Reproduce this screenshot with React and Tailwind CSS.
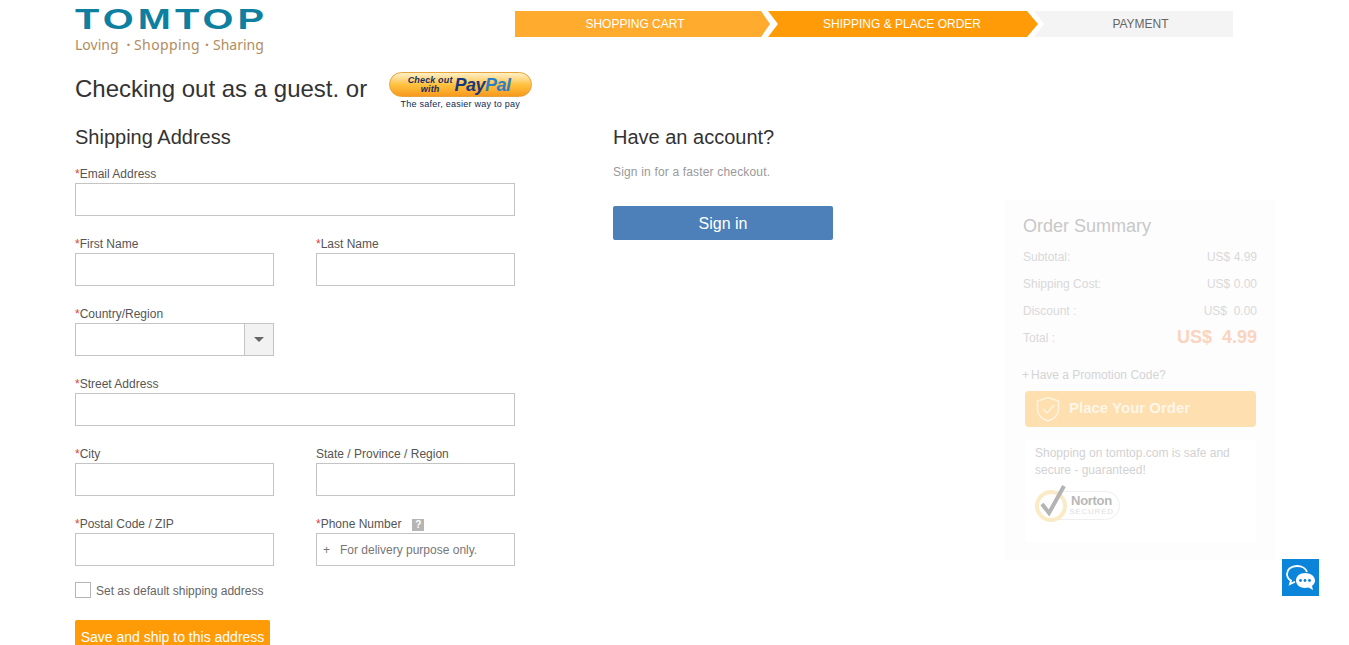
import React from "react";

function Field({ label, required = true, width = "w-full", children }) {
  return (
    <div className={`${width} mb-[19px]`}>
      <div className="h-[18px] text-[12px] leading-[18px] text-[#555]">
        {required && <span className="text-[#d9413a]">*</span>}
        {label}
        {label === "Phone Number" && (
          <span className="ml-[11px] inline-flex h-[12px] w-[12px] items-center justify-center bg-[#b5b5b5] align-[0px] text-[10px] font-bold leading-none text-white">
            ?
          </span>
        )}
      </div>
      {children || <div className="h-[33px] border border-[#c4c4c4] bg-white" />}
    </div>
  );
}

function Steps() {
  return (
    <div className="flex h-[26px] text-[12px] leading-[26px]">
      <div className="flex w-[255px] justify-center bg-[#ffab2e] pr-[15px] text-white [clip-path:polygon(0_0,246px_0,255px_50%,246px_100%,0_100%)]">
        SHOPPING CART
      </div>
      <div className="-ml-[2px] flex w-[270px] justify-center bg-[#ff9b07] pr-[2px] text-white [clip-path:polygon(0_0,259px_0,270px_50%,259px_100%,0_100%,10px_50%)]">
        SHIPPING &amp; PLACE ORDER
      </div>
      <div className="-ml-[4px] flex w-[199px] justify-center bg-[#f4f4f4] pl-[14px] text-[#666] [clip-path:polygon(0_0,100%_0,100%_100%,0_100%,10px_50%)]">
        PAYMENT
      </div>
    </div>
  );
}

function PayPalButton() {
  return (
    <div className="ml-[21px] flex w-[144px] flex-col items-center">
      <div className="flex h-[25px] w-[143px] items-center justify-center gap-[2px] rounded-full border border-[#e8a33c] bg-gradient-to-b from-[#fff0c4] via-[#ffc23e] to-[#f79a1e] pr-[2px]">
        <div className="text-center text-[9px] font-bold italic leading-[9px] tracking-[0.15px] text-[#1d2d5c]">
          Check out
          <br />
          with
        </div>
        <div className="text-[18px] font-bold italic leading-none tracking-[-0.5px]">
          <span className="text-[#17387f]">Pay</span>
          <span className="text-[#2a7fc4]">Pal</span>
        </div>
      </div>
      <div className="mt-[2px] text-[9px] leading-[11px] tracking-[0.25px] text-[#0c2a55]">
        The safer, easier way to pay
      </div>
    </div>
  );
}

function OrderRow({ label, value }) {
  return (
    <div className="flex h-[27px] items-center justify-between text-[12px] text-[#d9d9d9]">
      <span>{label}</span>
      <span className="whitespace-pre">{value}</span>
    </div>
  );
}

function OrderSummary() {
  return (
    <div className="ml-[172px] mt-[76px] h-[360px] w-[270px] bg-[#fdfdfd] px-[18px] pt-[14px]">
      <div className="h-[24px] text-[18px] leading-[24px] text-[#c8c8c8]">Order Summary</div>
      <div className="mt-[5px]">
        <OrderRow label="Subtotal:" value="US$ 4.99" />
        <OrderRow label="Shipping Cost:" value="US$ 0.00" />
        <OrderRow label="Discount :" value="US$  0.00" />
        <div className="flex h-[27px] items-center justify-between text-[12px] text-[#d9d9d9]">
          <span>Total :</span>
          <span className="whitespace-pre text-[18px] font-bold text-[#fad4bf]">US$  4.99</span>
        </div>
      </div>
      <div className="-ml-[1px] mt-[15px] flex h-[18px] text-[12px] leading-[18px] text-[#d4d4d4]">
        <span className="w-[9px]">+</span>
        <span>Have a Promotion Code?</span>
      </div>
      <div className="ml-[2px] mt-[7px] flex h-[36px] w-[231px] items-center rounded-[4px] bg-[#fddfb0] pl-[11px]">
        <svg width="24" height="26" viewBox="0 0 24 26" fill="none" stroke="#fff3df" strokeWidth="1.5">
          <path d="M12 1.500 22.500 5v8c0 6-4.500 10-10.500 12C6 23 1.500 19 1.500 13V5z" />
          <path d="m7 13 4 4 7-8" />
        </svg>
        <span className="mb-[2px] ml-[9px] text-[15px] font-bold text-[#fff6e8]">Place Your Order</span>
      </div>
      <div className="ml-[2px] mt-[13px] h-[102px] w-[231px] rounded-[4px] bg-white px-[10px] pt-[5px]">
        <div className="text-[12px] leading-[17px] text-[#d2d2d2]">
          Shopping on tomtop.com is safe and secure - guaranteed!
        </div>
        <div className="mt-[9px] flex h-[35px] w-[85px] items-center">
          <div className="z-10 flex h-[32px] w-[32px] shrink-0 items-center justify-center rounded-full border-[4px] border-[#fbeac6] bg-white">
            <svg width="28" height="36" viewBox="0 0 28 36" fill="none" className="-mt-[8px] ml-[3px] shrink-0">
              <path d="m3 20 7 9L25 2" stroke="#b4b4b4" strokeWidth="4" />
            </svg>
          </div>
          <div className="-ml-[14px] flex h-[29px] flex-1 flex-col items-center justify-center rounded-r-full border border-[#efefef] pb-[2px] pl-[10px]">
            <span className="text-[13px] font-bold leading-[13px] tracking-[-0.3px] text-[#b8b8b8]">Norton</span>
            <span className="text-[8px] leading-[9px] tracking-[0.8px] text-[#dedede]">SECURED</span>
          </div>
        </div>
      </div>
    </div>
  );
}

export default function App() {
  return (
    <div className="h-screen overflow-hidden bg-white pl-[75px] font-['Liberation_Sans',Arial,sans-serif]">
      <div className="flex h-[64px]">
        <div className="w-[440px] pt-[5px]">
          <div className="h-[29px] origin-left scale-x-[1.37] text-[29px] font-bold leading-[29px] tracking-[3px] text-[#0f7f9f]">
            TOMTOP
          </div>
          <div className="mt-[2px] flex font-['Noto_Sans',sans-serif] text-[14px] leading-[18px] text-[#b08d5f]">
            <span className="w-[59px]">
              Loving<span className="ml-[8px] font-bold">·</span>
            </span>
            <span className="w-[79px] tracking-[0.4px]">
              Shopping<span className="ml-[5px] font-bold">·</span>
            </span>
            <span>Sharing</span>
          </div>
        </div>
        <div className="pt-[11px]">
          <Steps />
        </div>
      </div>

      <div className="flex h-[60px] items-start pt-[8px]">
        <div className="pt-[3px] text-[24px] leading-[28px] text-[#333]">Checking out as a guest. or</div>
        <PayPalButton />
      </div>

      <div className="flex">
        <div className="w-[440px]">
          <div className="h-[27px] text-[20px] leading-[27px] text-[#333]">Shipping Address</div>
          <div className="mt-[14px]">
            <Field label="Email Address" />
            <div className="flex justify-between">
              <Field label="First Name" width="w-[199px]" />
              <Field label="Last Name" width="w-[199px]" />
            </div>
            <Field label="Country/Region" width="w-[199px]">
              <div className="flex h-[33px] border border-[#c4c4c4] bg-white">
                <div className="flex-1" />
                <div className="flex w-[29px] items-center justify-center border-l border-[#c4c4c4] bg-[#f2f2f2]">
                  <div className="h-0 w-0 border-x-[5px] border-t-[5px] border-x-transparent border-t-[#666]" />
                </div>
              </div>
            </Field>
            <Field label="Street Address" />
            <div className="flex justify-between">
              <Field label="City" width="w-[199px]" />
              <Field label="State / Province / Region" required={false} width="w-[199px]" />
            </div>
            <div className="flex justify-between">
              <Field label="Postal Code / ZIP" width="w-[199px]" />
              <Field label="Phone Number" width="w-[199px]">
                <div className="flex h-[33px] items-center border border-[#c4c4c4] bg-white pl-[6px] text-[12px] text-[#777]">
                  <span className="w-[17px]">+</span>
                  <span>For delivery purpose only.</span>
                </div>
              </Field>
            </div>
            <div className="-mt-[3px] flex h-[16px] items-center">
              <div className="h-[16px] w-[16px] border border-[#b5b5b5] bg-white" />
              <span className="ml-[5px] mt-[2px] text-[12px] text-[#666]">Set as default shipping address</span>
            </div>
            <div className="mt-[22px] flex h-[34px] w-[195px] items-center justify-center rounded-[2px] bg-[#ff9b07] text-[14px] text-white">
              Save and ship to this address
            </div>
          </div>
        </div>

        <div className="ml-[98px] w-[220px]">
          <div className="h-[27px] text-[20px] leading-[27px] text-[#333]">Have an account?</div>
          <div className="mt-[12px] h-[18px] text-[12px] leading-[18px] tracking-[0.17px] text-[#999]">Sign in for a faster checkout.</div>
          <div className="mt-[25px] flex h-[34px] items-center justify-center rounded-[2px] bg-[#4d7fb8] pt-[1px] text-[16px] text-white">
            Sign in
          </div>
        </div>

        <OrderSummary />
      </div>

      <div className="fixed left-[1282px] top-[559px] flex h-[37px] w-[37px] items-center justify-center bg-[#0a85d9]">
        <svg width="31" height="28" viewBox="0 0 31 28" fill="none">
          <path d="M12 2C6 2 2 5.500 2 10c0 3 1.500 5.200 4 6.600L5 20l5-2.300" stroke="#fff" strokeWidth="1.800" />
          <path d="M12 2c5 0 9 2.600 10 6" stroke="#fff" strokeWidth="1.800" />
          <path d="M20 9c-5 0-9 3-9 7.500S15 24 20 24c1.300 0 2.400-.2 3.400-.5L28 26l-1-4c1.900-1.400 3-3.300 3-5.500C30 12 25.500 9 20 9z" fill="#fff" />
          <circle cx="15.500" cy="16.500" r="1.400" fill="#0a85d9" />
          <circle cx="20" cy="16.500" r="1.400" fill="#0a85d9" />
          <circle cx="24.500" cy="16.500" r="1.400" fill="#0a85d9" />
        </svg>
      </div>
    </div>
  );
}
